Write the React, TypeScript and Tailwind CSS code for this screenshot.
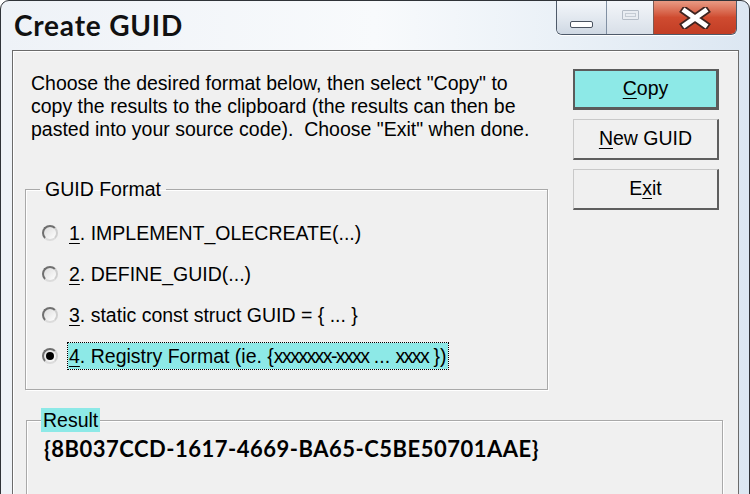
import React from 'react';

const sans = { fontFamily: '"Liberation Sans", Arial, sans-serif' };

function CaptionButtons() {
  return (
    <div className="flex h-[34px] mr-[12px] rounded-b-[6px] border border-t-0 border-[#4e5a6a] overflow-hidden shadow-[0_1px_0_#ffffff]">
      <div className="w-[50px] flex items-end justify-center pb-[6px] bg-gradient-to-b from-[#f3f6fa] via-[#e3e9f0] to-[#cfd8e3] border-r border-[#8190a3]">
        <div className="w-[23px] h-[7px] rounded-[2px] border border-[#4a5360] bg-white" />
      </div>
      <div className="w-[47px] flex items-start justify-center pt-[9px] bg-gradient-to-b from-[#f3f6fa] via-[#e6ebf1] to-[#d8dfe8] border-r border-[#7e5a52]">
        <div className="w-[17px] h-[10px] rounded-[1px] border border-[#b4bcc6] bg-[#e9edf2] flex items-center justify-center">
          <div className="w-[11px] h-[4px] border border-[#c5ccd4]" />
        </div>
      </div>
      <div className="w-[82px] flex items-center justify-center bg-gradient-to-b from-[#e89a84] via-[#cf4b30] to-[#c23d24]">
        <svg width="34" height="22" viewBox="0 0 34 22">
          <path d="M7 4 L27 18 M27 4 L7 18" stroke="#3e2420" strokeWidth="8.5" strokeLinecap="square" fill="none" />
          <path d="M7 4 L27 18 M27 4 L7 18" stroke="#ffffff" strokeWidth="5" strokeLinecap="square" fill="none" />
        </svg>
      </div>
    </div>
  );
}

function DlgButton({ children, active }: { children: React.ReactNode; active?: boolean }) {
  return (
    <button
      className={
        'w-[146px] h-[41px] text-[19.5px] text-black flex items-center justify-center ' +
        (active
          ? 'bg-[#8de9e7] border-2 border-[#5b5b5b] border-r-[3px] border-b-[3px]'
          : 'bg-[#f0f0f0] border border-[#c9c9c9] border-r-2 border-b-2 border-r-[#5e5e5e] border-b-[#5e5e5e]')
      }
      style={sans}
    >
      {children}
    </button>
  );
}

function Radio({ checked }: { checked?: boolean }) {
  return (
    <div className="w-[16px] h-[16px] rounded-full border-2 border-t-[#6f6f6f] border-l-[#6f6f6f] border-r-[#cfcfcf] border-b-[#dcdcdc] bg-gradient-to-br from-[#dcdcdc] to-white flex items-center justify-center shrink-0">
      {checked && <div className="w-[8px] h-[8px] rounded-full bg-black" />}
    </div>
  );
}

function Option({ n, children, checked }: { n: string; children: React.ReactNode; checked?: boolean }) {
  return (
    <div className="h-[41px] flex items-center pl-[16px]">
      <Radio checked={checked} />
      <span
        className={
          'ml-[10px] text-[19.5px] leading-[26px] text-black whitespace-nowrap ' +
          (checked ? 'bg-[#8de9e7] outline outline-1 outline-dotted outline-black px-[1px]' : 'px-[1px]')
        }
        style={sans}
      >
        <span className="underline underline-offset-[3px]">{n}</span>. {children}
      </span>
    </div>
  );
}

export default function App() {
  return (
    <div className="w-[750px] h-[494px] overflow-hidden bg-white">
      <div className="h-[540px] rounded-t-[9px] border border-[#2f3338] bg-gradient-to-r from-[#eef2f7] via-[#f8fafc] to-[#dce7f2] flex flex-col">
        <div className="h-[49px] flex items-start justify-between">
          <div className="pl-[13px] pt-[7px] text-[28px] font-bold text-[#111] leading-[34px] tracking-[0.8px]" style={{ fontFamily: 'Lato, "DejaVu Sans", sans-serif' }}>
            Create GUID
          </div>
          <CaptionButtons />
        </div>
        <div className="ml-[11px] mr-[10px] flex-1 border border-[#6b6b6b] bg-[#f0f0f0] shadow-[inset_1px_1px_0_#ffffff] flex flex-col">
          <div className="flex">
            <div className="w-[535px] pl-[12px] flex flex-col">
              <p className="pl-[6px] pt-[21px] text-[19.5px] leading-[23px] text-black whitespace-nowrap" style={sans}>
                Choose the desired format below, then select "Copy" to<br />
                copy the results to the clipboard (the results can then be<br />
                pasted into your source code).&nbsp; Choose "Exit" when done.
              </p>
              <fieldset className="mt-[37px] h-[212px] border border-[#a9a9a9] shadow-[inset_1px_1px_0_#ffffff,1px_1px_0_#ffffff]">
                <legend className="ml-[14px] px-[5px] text-[19.5px] leading-[23px] text-black" style={sans}>
                  GUID Format
                </legend>
                <div className="pt-[11px] flex flex-col">
                  <Option n="1">IMPLEMENT_OLECREATE(...)</Option>
                  <Option n="2">DEFINE_GUID(...)</Option>
                  <Option n="3">static const struct GUID = {'{'} ... {'}'}</Option>
                  <Option n="4" checked>
                    Registry Format (ie. {'{'}
                    <span className="tracking-[-1.6px]">xxxxxxx-xxxx</span> ...{' '}
                    <span className="tracking-[-1.6px]">xxxx</span> {'})'}
                  </Option>
                </div>
              </fieldset>
            </div>
            <div className="ml-auto mr-[19px] pt-[18px] flex flex-col gap-[9px]">
              <DlgButton active>
                <span><span className="underline underline-offset-[3px]">C</span>opy</span>
              </DlgButton>
              <DlgButton>
                <span><span className="underline underline-offset-[3px]">N</span>ew GUID</span>
              </DlgButton>
              <DlgButton>
                <span>E<span className="underline underline-offset-[3px]">x</span>it</span>
              </DlgButton>
            </div>
          </div>
          <fieldset className="mt-[18px] ml-[13px] mr-[15px] h-[120px] border border-[#a9a9a9] shadow-[inset_1px_1px_0_#ffffff,1px_1px_0_#ffffff]">
            <legend className="ml-[14px] px-[2px] bg-[#8de9e7] text-[19.5px] leading-[24px] text-black" style={sans}>
              Result
            </legend>
            <div className="pl-[17px] pt-[3px] text-[22px] font-bold leading-[28px] text-black tracking-[0.5px]" style={{ fontFamily: 'Lato, "DejaVu Sans", sans-serif' }}>
              {'{8B037CCD-1617-4669-BA65-C5BE50701AAE}'}
            </div>
          </fieldset>
        </div>
      </div>
    </div>
  );
}
